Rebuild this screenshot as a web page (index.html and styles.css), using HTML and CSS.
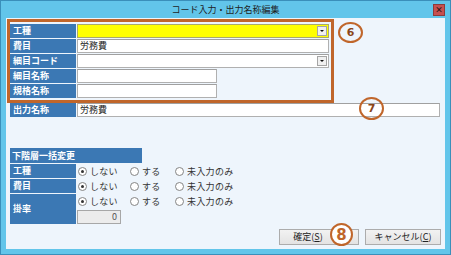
FILE: index.html
```
<!DOCTYPE html>
<html lang="ja">
<head>
<meta charset="utf-8">
<link rel="stylesheet" href="styles.css">
</head>
<body>
<div class="window">
  <div class="titlebar">
    <div class="title">コード入力・出力名称編集</div>
    <div class="close">×</div>
  </div>
  <div class="client">
    <div class="group">
      <div class="row"><div class="lbl">工種</div><div class="field w252 yellow select"><span class="arrow"></span></div></div>
      <div class="row"><div class="lbl">費目</div><div class="field w252">労務費</div></div>
      <div class="row"><div class="lbl">細目コード</div><div class="field w252 select"><span class="arrow"></span></div></div>
      <div class="row"><div class="lbl">細目名称</div><div class="field w140"></div></div>
      <div class="row"><div class="lbl">規格名称</div><div class="field w140"></div></div>
    </div>
    <div class="row out"><div class="lbl">出力名称</div><div class="field w363">労務費</div></div>

    <div class="table2">
      <div class="hdr">下階層一括変更</div>
      <div class="row">
        <div class="lbl">工種</div>
        <div class="opts">
          <div class="opt o1"><span class="radio on"></span>しない</div>
          <div class="opt o2"><span class="radio"></span>する</div>
          <div class="opt"><span class="radio"></span>未入力のみ</div>
        </div>
      </div>
      <div class="row">
        <div class="lbl">費目</div>
        <div class="opts">
          <div class="opt o1"><span class="radio on"></span>しない</div>
          <div class="opt o2"><span class="radio"></span>する</div>
          <div class="opt"><span class="radio"></span>未入力のみ</div>
        </div>
      </div>
      <div class="row tall">
        <div class="lbl">掛率</div>
        <div class="rate">
          <div class="opts">
            <div class="opt o1"><span class="radio on"></span>しない</div>
            <div class="opt o2"><span class="radio"></span>する</div>
            <div class="opt"><span class="radio"></span>未入力のみ</div>
          </div>
          <div class="num">0</div>
        </div>
      </div>
    </div>

    <div class="buttons">
      <div class="btn ok">確定(<u>S</u>)</div>
      <div class="btn cancel">キャンセル(<u>C</u>)</div>
    </div>

    <div class="mark m6">6</div>
    <div class="mark m7">7</div>
    <div class="mark m8">8</div>
  </div>
</div>
</body>
</html>
```
FILE: styles.css
```
body {
  margin: 0;
  background: #ffffff;
}

.window {
  width: 451px;
  height: 255px;
  box-sizing: border-box;
  border: 1px solid #3a8fba;
  background: #62c5ea;
  display: flex;
  flex-direction: column;
  font-family: "Noto Sans CJK JP", "Noto Sans", sans-serif;
}

.titlebar {
  height: 17px;
  display: grid;
  grid-template-columns: 1fr auto 1fr;
  align-items: start;
}

.title {
  grid-column: 2;
  font-size: 9px;
  line-height: 18px;
  color: #1e1e1e;
}

.close {
  grid-column: 3;
  justify-self: end;
  margin: 3px 5px 0 0;
  width: 12px;
  height: 12px;
  box-sizing: border-box;
  background: #c75050;
  border: 1px solid #8e3b3b;
  color: #2a1010;
  font-size: 8px;
  line-height: 9px;
  text-align: center;
  font-weight: bold;
}

.client {
  margin-left: 5px;
  width: 439px;
  height: 231px;
  background: #eef5fc;
  position: relative;
  display: flex;
  flex-direction: column;
}

.group {
  margin: 1px 0 0 1px;
  width: 327px;
  height: 84px;
  box-sizing: border-box;
  border: 3px solid #c0662b;
  padding-top: 2px;
  display: flex;
  flex-direction: column;
  gap: 1px;
}

.row {
  display: flex;
  height: 14px;
  gap: 1px;
}

.lbl {
  width: 66px;
  flex: none;
  box-sizing: border-box;
  background: #3b78b4;
  color: #ffffff;
  font-weight: bold;
  font-size: 9px;
  line-height: 14px;
  padding-left: 3px;
}

.field {
  box-sizing: border-box;
  background: #ffffff;
  border: 1px solid #b0b0b0;
  border-top-color: #a0a0a0;
  font-size: 9px;
  line-height: 12px;
  padding-left: 2px;
  color: #222222;
}

.w252 { width: 252px; }
.w140 { width: 140px; }
.w363 { width: 363px; }

.yellow {
  background: #ffff00;
  border-color: #a9a96c;
}

.select {
  display: flex;
  justify-content: flex-end;
  align-items: center;
  padding-right: 1px;
}

.arrow {
  width: 10px;
  height: 10px;
  box-sizing: border-box;
  background: #f0f0f0;
  border: 1px solid #a5a5a5;
  display: flex;
  align-items: center;
  justify-content: center;
}

.arrow::after {
  content: "";
  border-left: 2px solid transparent;
  border-right: 2px solid transparent;
  border-top: 2px solid #111111;
}

.out {
  margin-left: 4px;
}

.table2 {
  margin: 31px 0 0 4px;
  display: flex;
  flex-direction: column;
  gap: 1px;
}

.hdr {
  width: 132px;
  height: 15px;
  box-sizing: border-box;
  background: #3b78b4;
  color: #ffffff;
  font-weight: bold;
  font-size: 9px;
  line-height: 15px;
  padding-left: 2px;
}

.opts {
  display: flex;
  align-items: center;
  height: 14px;
  padding-left: 1px;
}

.opt {
  display: flex;
  align-items: center;
  gap: 3px;
  font-size: 9px;
  color: #333333;
  letter-spacing: 0.3px;
}

.o1 { width: 52px; }
.o2 { width: 45px; }

.radio {
  width: 9px;
  height: 9px;
  box-sizing: border-box;
  border: 1px solid #858585;
  border-radius: 50%;
  background: #ffffff;
  display: flex;
  align-items: center;
  justify-content: center;
}

.radio.on::after {
  content: "";
  width: 3px;
  height: 3px;
  border-radius: 50%;
  background: #333333;
}

.tall {
  height: 30px;
}

.tall .lbl {
  line-height: 30px;
}

.rate {
  display: flex;
  flex-direction: column;
  gap: 2px;
  padding-top: 1px;
}

.num {
  width: 44px;
  height: 14px;
  box-sizing: border-box;
  background: #ececec;
  border: 1px solid #a7a7a7;
  font-size: 9px;
  line-height: 12px;
  text-align: right;
  padding-right: 3px;
  color: #555555;
  margin-left: 0;
}

.buttons {
  display: flex;
  justify-content: flex-end;
  gap: 6px;
  margin-top: 5px;
  padding-right: 4px;
}

.btn {
  height: 16px;
  box-sizing: border-box;
  border: 1px solid #acacac;
  background: linear-gradient(#f2f2f2, #e3e3e3);
  font-size: 9px;
  line-height: 14px;
  text-align: center;
  color: #222222;
}

.btn u {
  text-decoration: underline;
}

.ok {
  width: 80px;
  padding-right: 22px;
}

.cancel {
  width: 76px;
}

.mark {
  position: absolute;
  box-sizing: border-box;
  border: 2.5px solid #c0662b;
  border-radius: 50%;
  display: flex;
  align-items: center;
  justify-content: center;
  font-family: "DejaVu Sans", sans-serif;
  font-weight: bold;
  color: #8a4519;
  font-size: 11px;
}

.m6 {
  left: 332px;
  top: 4px;
  width: 25px;
  height: 21px;
}

.m7 {
  left: 353px;
  top: 79px;
  width: 25px;
  height: 23px;
}

.m8 {
  left: 324px;
  top: 205px;
  width: 23px;
  height: 23px;
  background: #ffffff;
  color: #c0662b;
  font-size: 15px;
}
```
